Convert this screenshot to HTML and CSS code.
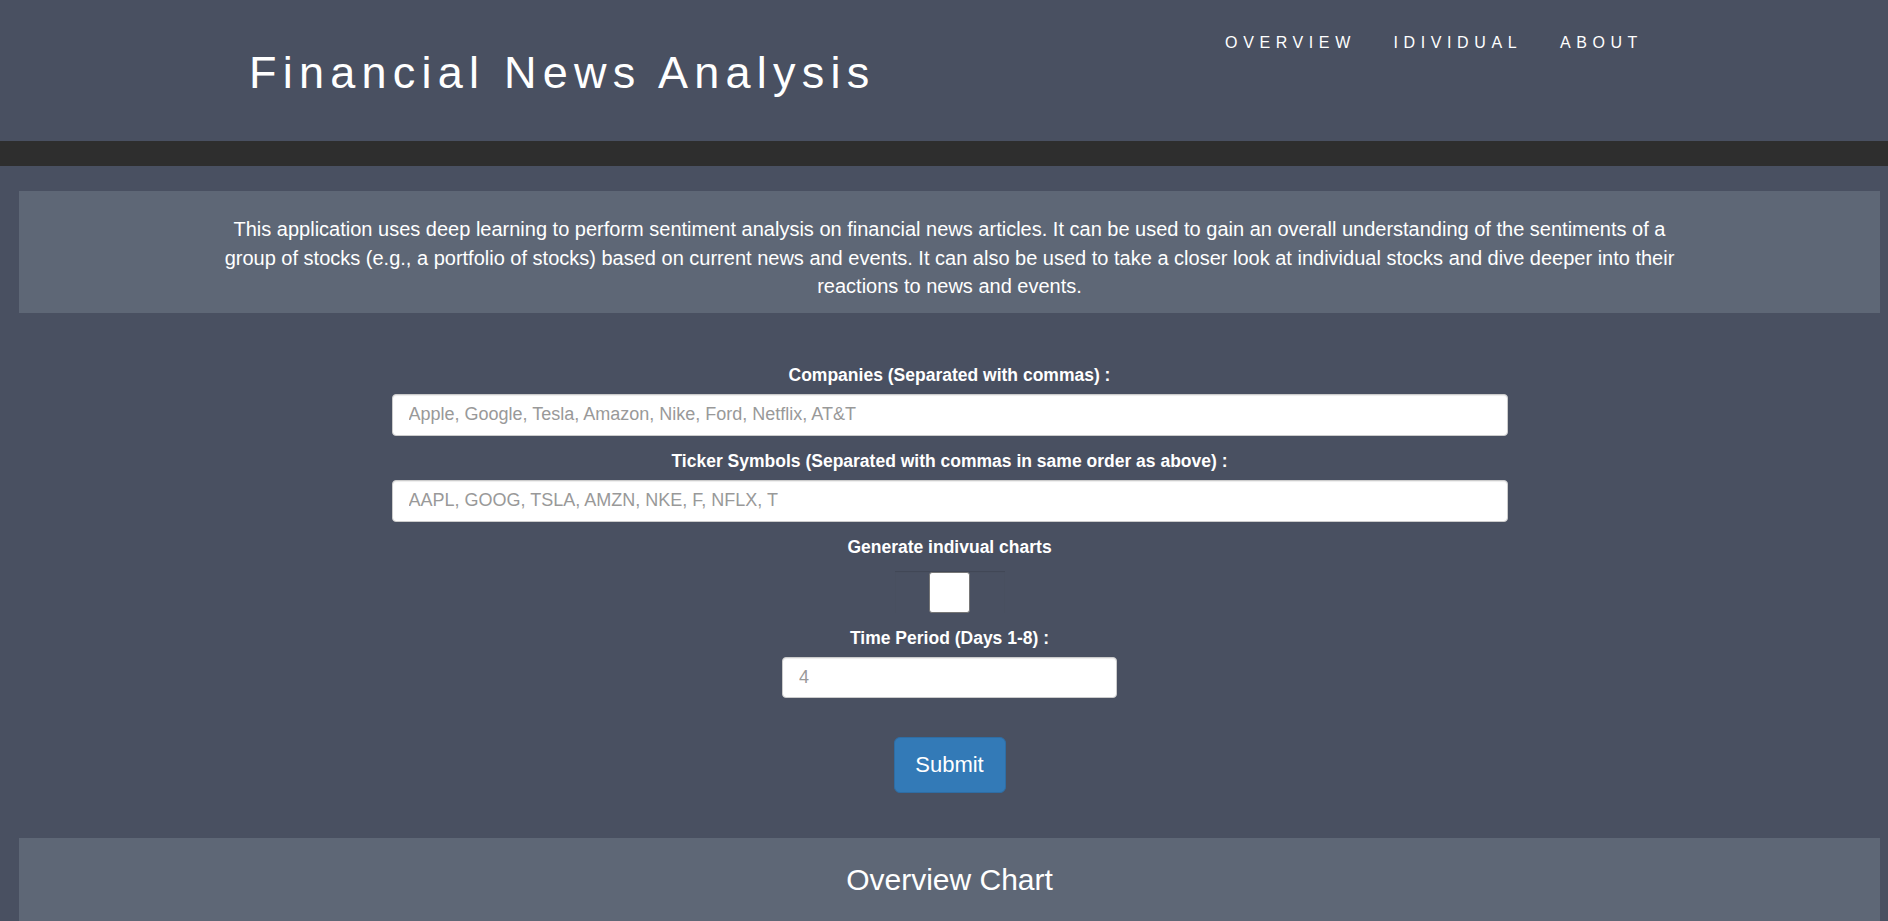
FILE: index.html
```html
<!DOCTYPE html>
<html lang="en">
<head>
<meta charset="utf-8">
<title>Financial News Analysis</title>
<link rel="stylesheet" href="styles.css">
</head>
<body>
<header class="site-header">
  <div class="header-inner">
    <h1 class="brand">Financial News Analysis</h1>
    <nav class="nav">
      <a class="nav-link" href="#">OVERVIEW</a>
      <a class="nav-link" href="#">IDIVIDUAL</a>
      <a class="nav-link" href="#">ABOUT</a>
    </nav>
  </div>
</header>
<div class="band"></div>
<main class="main">
  <section class="panel intro">
    <p class="intro-text">This application uses deep learning to perform sentiment analysis on financial news articles. It can be used to gain an overall understanding of the sentiments of a group of stocks (e.g., a portfolio of stocks) based on current news and events. It can also be used to take a closer look at individual stocks and dive deeper into their reactions to news and events.</p>
  </section>
  <form class="form">
    <label class="field-label" for="companies">Companies (Separated with commas) :</label>
    <input class="field field-wide" id="companies" type="text" placeholder="Apple, Google, Tesla, Amazon, Nike, Ford, Netflix, AT&amp;T">
    <label class="field-label" for="tickers">Ticker Symbols (Separated with commas in same order as above) :</label>
    <input class="field field-wide" id="tickers" type="text" placeholder="AAPL, GOOG, TSLA, AMZN, NKE, F, NFLX, T">
    <label class="field-label" for="charts">Generate indivual charts</label>
    <div class="check-wrap"><input class="check" id="charts" type="checkbox"></div>
    <label class="field-label" for="days">Time Period (Days 1-8) :</label>
    <input class="field field-small" id="days" type="text" placeholder="4">
    <button class="submit" type="button">Submit</button>
  </form>
  <section class="panel chart">
    <h2 class="chart-title">Overview Chart</h2>
  </section>
</main>
</body>
</html>
```
FILE: styles.css
```css
* { box-sizing: border-box; }

html, body {
  margin: 0;
  padding: 0;
  background: #495061;
  font-family: "Liberation Sans", Arial, sans-serif;
  color: #ffffff;
  overflow: hidden;
}

.site-header {
  background: #495061;
  height: 141px;
}

.header-inner {
  display: flex;
  justify-content: space-between;
  align-items: flex-start;
  padding: 0 245px 0 249px;
  height: 100%;
}

.brand {
  margin: 0;
  padding-top: 47px;
  font-size: 45px;
  line-height: 52px;
  font-weight: normal;
  letter-spacing: 6.25px;
  color: #ffffff;
}

.nav {
  display: flex;
  gap: 37.7px;
  padding-top: 33px;
  font-size: 16px;
  line-height: 20px;
  letter-spacing: 5.6px;
}

.nav-link {
  color: #ffffff;
  text-decoration: none;
}

.band {
  height: 25px;
  background: #2e2e2e;
}

.main {
  padding: 25px 8px 0 19px;
}

.panel {
  background: #5e6776;
}

.intro {
  padding: 24px 15px 12px;
  text-align: center;
}

.intro-text {
  margin: 0 auto;
  max-width: 1460px;
  font-size: 20px;
  line-height: 1.42857;
}

.form {
  display: flex;
  flex-direction: column;
  align-items: center;
  margin-top: 50px;
}

.field-label {
  display: block;
  font-size: 17.5px;
  line-height: 25px;
  font-weight: bold;
  margin-bottom: 6px;
  text-align: center;
}

.field {
  height: 42px;
  padding: 0 16px;
  border: 1px solid #cccccc;
  border-radius: 4px;
  background: #ffffff;
  font-family: "Liberation Sans", Arial, sans-serif;
  font-size: 18px;
  color: #555555;
  box-shadow: inset 0 1px 1px rgba(0, 0, 0, 0.075);
  margin-bottom: 13px;
}

.field::placeholder {
  color: #999999;
}

.field-wide {
  width: 1116px;
}

.field-small {
  width: 335px;
  height: 41px;
  margin-bottom: 0;
}

.check-wrap {
  width: 110px;
  height: 42px;
  margin-top: 5px;
  margin-bottom: 13px;
  display: flex;
  justify-content: center;
  align-items: flex-start;
  box-shadow: inset 0 1px 1px rgba(0, 0, 0, 0.12);
}

.check {
  appearance: none;
  -webkit-appearance: none;
  margin: 1px 0 0;
  width: 41px;
  height: 41px;
  background: #ffffff;
  border: 1px solid #767676;
  border-radius: 3px;
}

.submit {
  margin-top: 39px;
  width: 112px;
  height: 56px;
  padding: 0;
  background: #337ab7;
  border: 1px solid #2e6da4;
  border-radius: 6px;
  color: #ffffff;
  font-family: "Liberation Sans", Arial, sans-serif;
  font-size: 22px;
}

.chart {
  margin-top: 45px;
  min-height: 200px;
  padding-top: 25px;
  text-align: center;
}

.chart-title {
  margin: 0;
  font-size: 30px;
  line-height: 33px;
  font-weight: normal;
}
```
